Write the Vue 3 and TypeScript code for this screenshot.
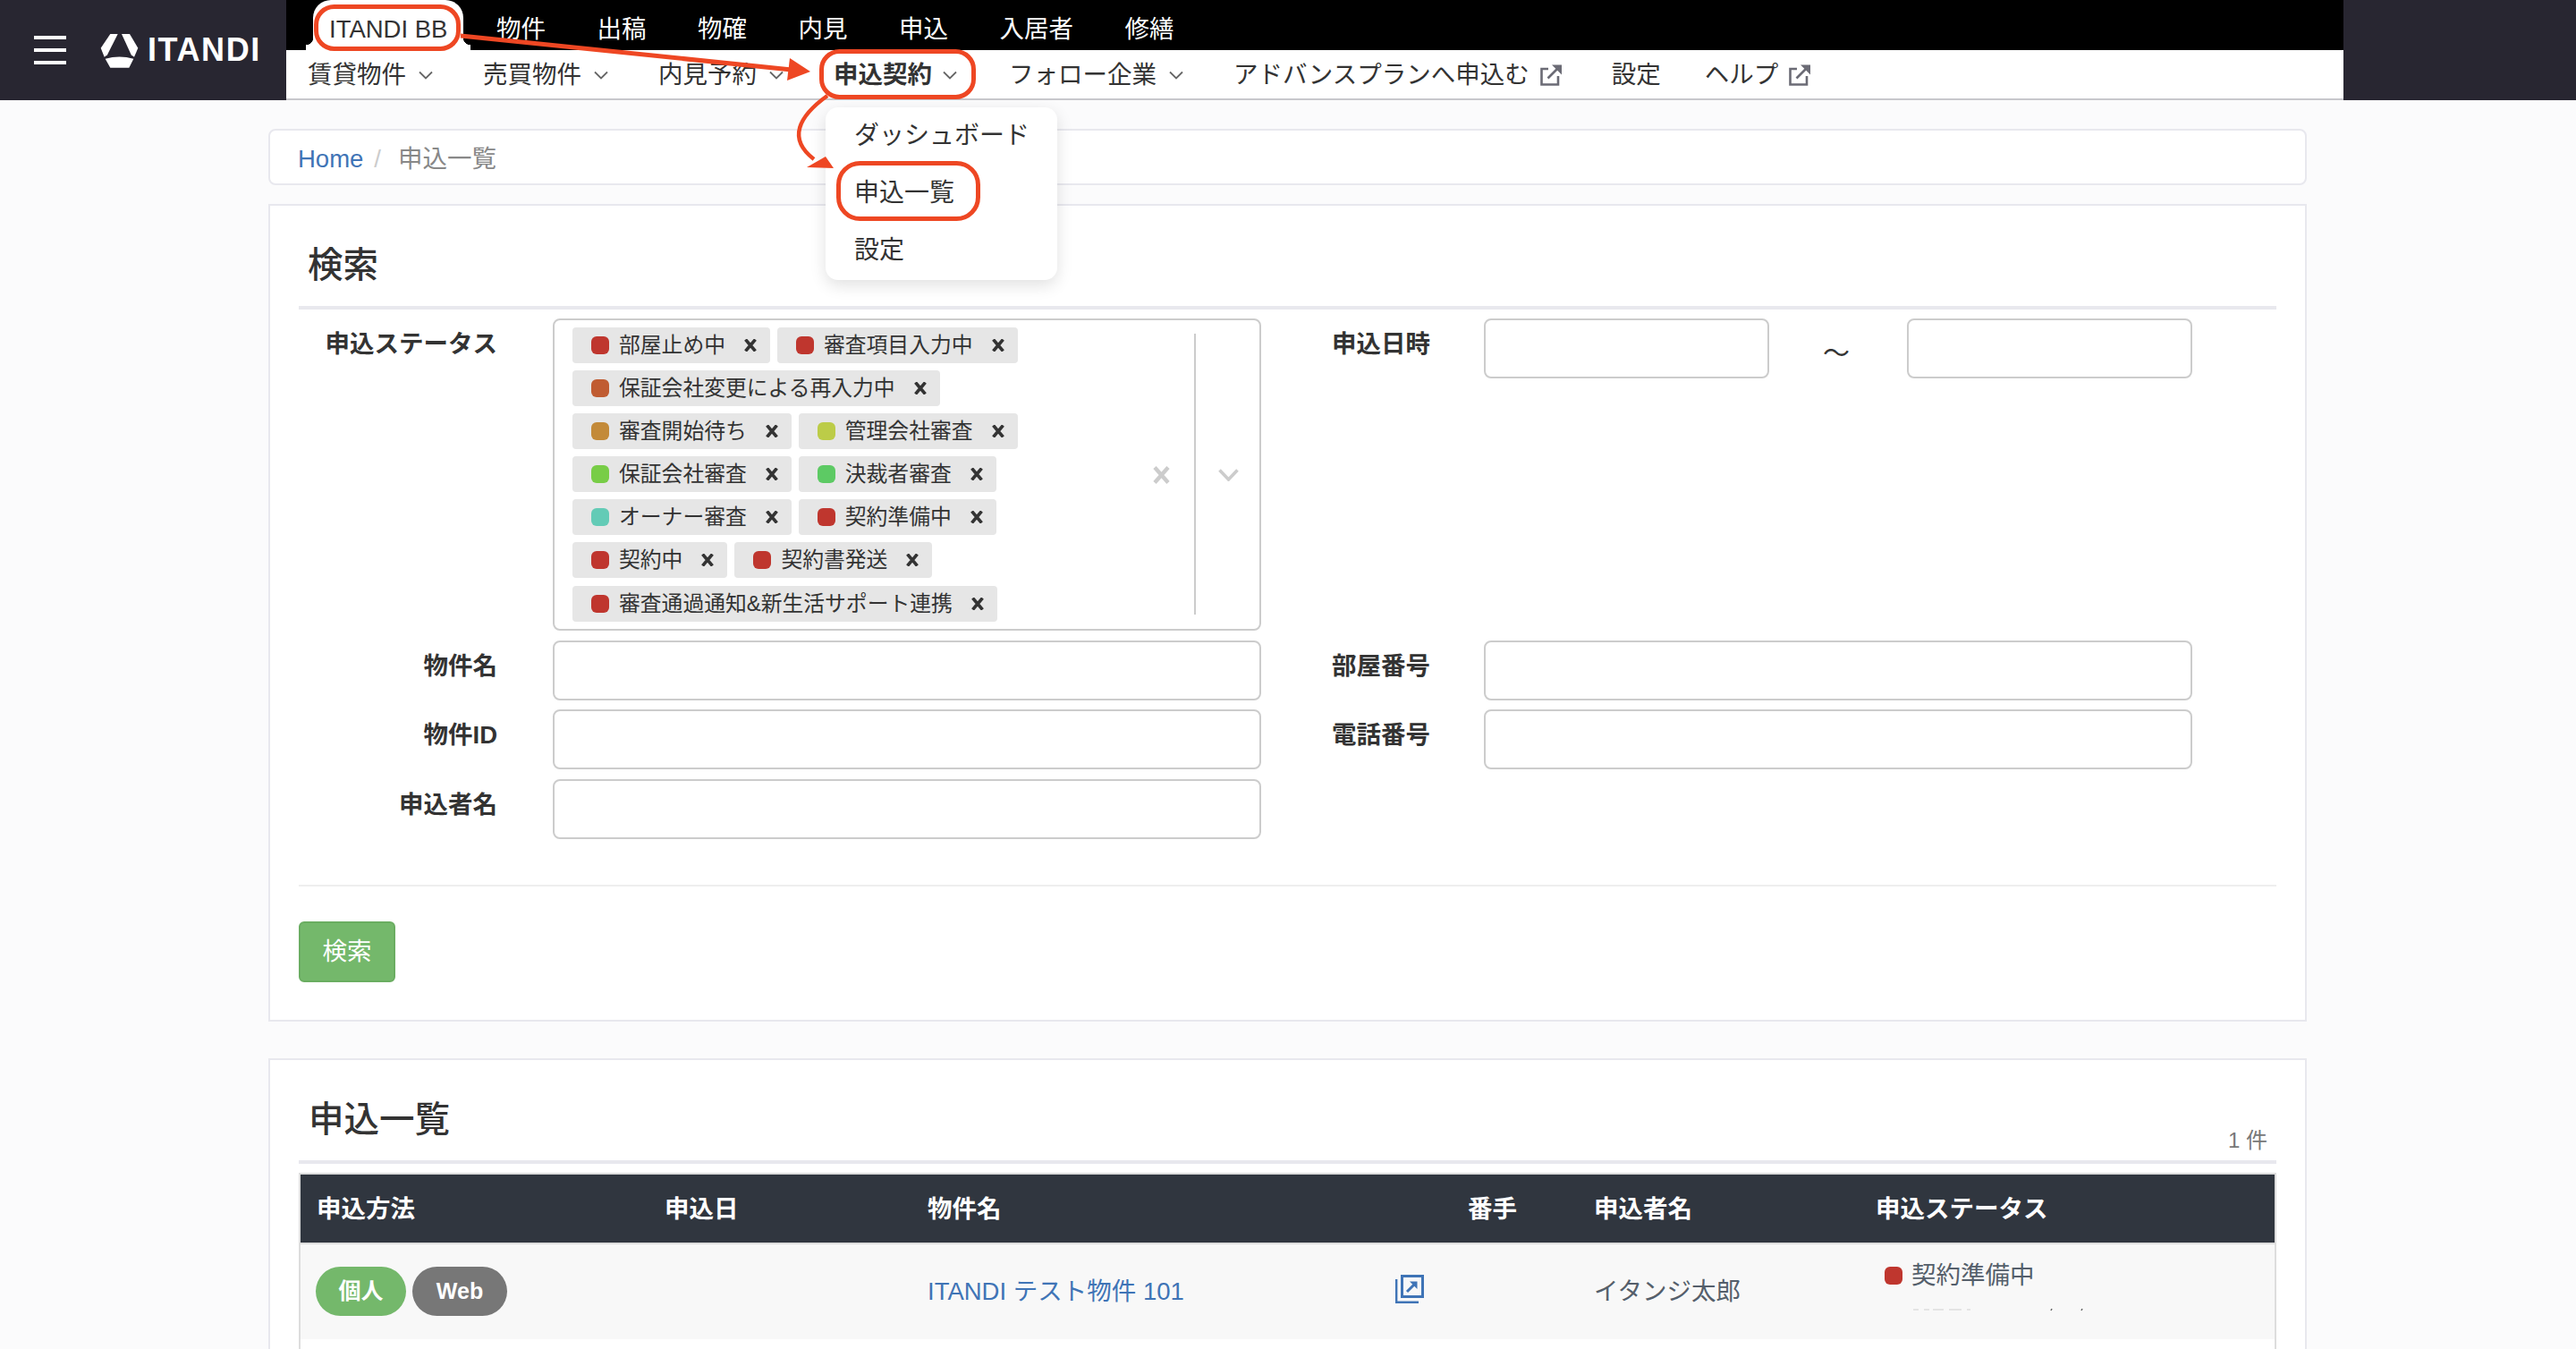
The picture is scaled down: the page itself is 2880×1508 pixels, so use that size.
<script setup lang="ts">
interface StatusTag {
  label: string
  color: string
}

interface NavItem {
  label: string
  chevron?: boolean
  external?: boolean
  active?: boolean
  tight?: boolean
}

const topTabs: string[] = ['物件', '出稿', '物確', '内見', '申込', '入居者', '修繕']

const navItems: NavItem[] = [
  { label: '賃貸物件', chevron: true },
  { label: '売買物件', chevron: true },
  { label: '内見予約', chevron: true },
  { label: '申込契約', chevron: true, active: true },
  { label: 'フォロー企業', chevron: true },
  { label: 'アドバンスプランへ申込む', external: true },
  { label: '設定' },
  { label: 'ヘルプ', external: true, tight: true },
]

const menuItems: string[] = ['ダッシュボード', '申込一覧', '設定']

const red = '#bf362e'
const statusTags: StatusTag[] = [
  { label: '部屋止め中', color: red },
  { label: '審査項目入力中', color: red },
  { label: '保証会社変更による再入力中', color: '#c05c32' },
  { label: '審査開始待ち', color: '#c38a39' },
  { label: '管理会社審査', color: '#bccc48' },
  { label: '保証会社審査', color: '#78cd47' },
  { label: '決裁者審査', color: '#5dca64' },
  { label: 'オーナー審査', color: '#63cbb6' },
  { label: '契約準備中', color: red },
  { label: '契約中', color: red },
  { label: '契約書発送', color: red },
  { label: '審査通過通知&新生活サポート連携', color: red },
]

const columns: string[] = ['申込方法', '申込日', '物件名', '番手', '申込者名', '申込ステータス']
</script>

<template>
  <div class="page">
    <header class="header">
      <div class="brand">
        <div class="burger"><span></span><span></span><span></span></div>
        <svg class="brand-mark" viewBox="0 0 43 39" aria-hidden="true">
          <path d="M11.3 1H19.7L8 24.3L4.7 26.7L0.7 16.7Z" fill="#fff" />
          <path d="M24 1H33L42.3 16.7L38 26.7L34.7 24.3Z" fill="#fff" />
          <path d="M5.7 28.7Q21.5 24.5 37.3 28.7L32.3 38.7H11.3Z" fill="#fff" />
        </svg>
        <span class="brand-name">ITANDI</span>
      </div>

      <div class="header-main">
        <div class="tabs">
          <span class="tab tab--active">ITANDI BB</span>
          <span v-for="tab in topTabs" :key="tab" class="tab">{{ tab }}</span>
        </div>
        <nav class="nav">
          <div
              v-for="item in navItems"
              :key="item.label"
              :class="['nav-item', { 'nav-item--active': item.active, 'nav-item--tight': item.tight }]"
          >
            <span>{{ item.label }}</span>
            <svg v-if="item.chevron" class="nav-chevron" viewBox="0 0 16 10" aria-hidden="true">
              <path d="M1 1.5L8 8.5L15 1.5" fill="none" stroke="#666" stroke-width="1.8" />
            </svg>
            <svg v-if="item.external" class="nav-external" viewBox="0 0 24 24" aria-hidden="true">
              <path d="M9 5H1.5V22.5H20V13" fill="none" stroke="#6b6b75" stroke-width="2.6" />
              <path d="M8.5 15.5L20 4" fill="none" stroke="#6b6b75" stroke-width="2.6" />
              <path d="M13 0.5H24V11.5Z" fill="#6b6b75" />
            </svg>
            <div v-if="item.active" class="menu">
              <div v-for="entry in menuItems" :key="entry" class="menu-item">{{ entry }}</div>
            </div>
          </div>
        </nav>
      </div>

      <div class="header-side"></div>
    </header>

    <main class="main">
      <div class="breadcrumb">
        <a class="link">Home</a>
        <span class="breadcrumb-sep">/</span>
        <span>申込一覧</span>
      </div>

      <section class="panel">
        <div class="panel-head">
          <h2 class="panel-title panel-title--search">検索</h2>
        </div>

        <div class="form">
          <div class="form-row">
            <label class="form-label">申込ステータス</label>
            <div class="select">
              <div class="select-values">
                <span v-for="tag in statusTags" :key="tag.label" class="tag">
                  <i class="dot" :style="{ backgroundColor: tag.color }"></i>
                  <span class="tag-label">{{ tag.label }}</span>
                  <svg class="tag-x" viewBox="0 0 14 14" aria-hidden="true">
                    <path d="M1.5 0.5L12.5 13.5M12.5 0.5L1.5 13.5" stroke="#333" stroke-width="3.6" />
                  </svg>
                </span>
              </div>
              <svg class="select-clear" viewBox="0 0 19 20" aria-hidden="true">
                <path d="M2 1.5L17 18.5M17 1.5L2 18.5" stroke="#ccc" stroke-width="4.4" />
              </svg>
              <span class="select-divider"></span>
              <svg class="select-chevron" viewBox="0 0 23 14" aria-hidden="true">
                <path d="M1.5 1.5L11.5 12L21.5 1.5" fill="none" stroke="#ccc" stroke-width="3.6" />
              </svg>
            </div>
            <label class="form-label form-label--side">申込日時</label>
            <input class="input input--date" type="text" />
            <span class="tilde">～</span>
            <input class="input input--date" type="text" />
          </div>

          <div class="form-row">
            <label class="form-label">物件名</label>
            <input class="input input--wide" type="text" />
            <label class="form-label form-label--side">部屋番号</label>
            <input class="input input--wide" type="text" />
          </div>

          <div class="form-row">
            <label class="form-label">物件ID</label>
            <input class="input input--wide" type="text" />
            <label class="form-label form-label--side">電話番号</label>
            <input class="input input--wide" type="text" />
          </div>

          <div class="form-row">
            <label class="form-label">申込者名</label>
            <input class="input input--wide" type="text" />
          </div>
        </div>

        <div class="form-rule"></div>
        <button class="search-button" type="button">検索</button>
      </section>

      <section class="panel panel--list">
        <div class="panel-head panel-head--ruled">
          <h2 class="panel-title">申込一覧</h2>
          <span class="count">1 件</span>
        </div>

        <div class="table-wrap">
          <table class="table">
            <colgroup>
              <col style="width: 387px" />
              <col style="width: 294px" />
              <col style="width: 604px" />
              <col style="width: 141px" />
              <col style="width: 315px" />
              <col />
            </colgroup>
            <thead>
              <tr>
                <th v-for="column in columns" :key="column">{{ column }}</th>
              </tr>
            </thead>
            <tbody>
              <tr>
                <td>
                  <span class="pill pill--green">個人</span>
                  <span class="pill pill--gray">Web</span>
                </td>
                <td></td>
                <td>
                  <div class="property">
                    <a class="link">ITANDI テスト物件 101</a>
                    <svg class="open-icon" viewBox="0 0 32 32" aria-hidden="true">
                      <rect x="7.5" y="1.5" width="23" height="23" fill="none" stroke="#3f74b6" stroke-width="3" />
                      <path d="M1.2 5V30.8H26" fill="none" stroke="#3f74b6" stroke-width="2.4" />
                      <path d="M13 19L22 10" fill="none" stroke="#3f74b6" stroke-width="3" />
                      <path d="M16 7.5H24.5V16Z" fill="#3f74b6" />
                    </svg>
                  </div>
                </td>
                <td></td>
                <td>イタンジ太郎</td>
                <td class="status-cell">
                  <div class="status">
                    <i class="dot" :style="{ backgroundColor: red }"></i>
                    <span>契約準備中</span>
                  </div>
                  <svg class="status-rest" viewBox="0 0 230 4" aria-hidden="true">
                    <path d="M2 2H8M14 2H20M24 2H36M42 2H56M62 2H66" stroke="#ddd" stroke-width="1.5" />
                    <path d="M156 3L157 1M190 3L191 1" stroke="#666" stroke-width="1.5" />
                  </svg>
                </td>
              </tr>
            </tbody>
          </table>
        </div>
      </section>
    </main>

    <!-- 説明用の赤い枠と矢印 -->
    <svg class="callouts" viewBox="0 0 2880 1508" aria-hidden="true">
      <g fill="none" stroke="#ee4723">
        <rect x="353.5" y="7.5" width="159" height="47" rx="20" stroke-width="5" />
        <rect x="918.5" y="57.5" width="170" height="51" rx="20" stroke-width="5" />
        <rect x="937.5" y="182.5" width="156" height="62" rx="24" stroke-width="5" />
        <path d="M515 40L885 78" stroke-width="5" />
        <path d="M925 107C893 130 880 155 910 178" stroke-width="4.5" />
      </g>
      <path d="M883 65L906 80L880 90Z" fill="#ee4723" />
      <path d="M923 175L932 188L902 187Z" fill="#ee4723" />
    </svg>
  </div>
</template>

<style>
body {
  background-color: #fbfbfc;
}
</style>

<style scoped>
.page {
  position: relative;
  width: 2880px;
  height: 1508px;
  overflow: hidden;
  background-color: #fbfbfc;
  color: #333;
  font-family: "Liberation Sans", "Noto Sans CJK JP", sans-serif;
  font-size: 27.5px;
  line-height: 1.4;
}

.header {
  display: flex;
  height: 112px;
}

.brand {
  display: flex;
  align-items: center;
  width: 320px;
  padding-left: 38px;
  box-sizing: border-box;
  background-color: #282631;
}

.burger {
  display: flex;
  flex-direction: column;
  justify-content: space-between;
  width: 36px;
  height: 32px;
}

.burger span {
  height: 4px;
  background-color: #fff;
}

.brand-mark {
  width: 43px;
  height: 39px;
  margin-left: 38px;
}

.brand-name {
  margin-left: 10px;
  color: #fff;
  font-size: 36px;
  font-weight: 700;
  letter-spacing: 1.6px;
  line-height: 1;
}

.header-main {
  flex: 1;
  display: flex;
  flex-direction: column;
}

.header-side {
  width: 260px;
  background-color: #282631;
}

.tabs {
  display: flex;
  gap: 57.5px;
  height: 56px;
  padding: 8px 0 0 48px;
  box-sizing: border-box;
  background-color: #000;
  color: #fff;
}

.tab {
  line-height: 50px;
}

.tab--active {
  position: relative;
  height: 56px;
  margin: -8px -21px 0 -18px;
  padding: 8px 18px 0;
  box-sizing: border-box;
  border-radius: 20px 20px 0 0;
  background-color: #fff;
  color: #333;
}

.tab--active::before,
.tab--active::after {
  content: "";
  position: absolute;
  bottom: 0;
  width: 8px;
  height: 14px;
}

.tab--active::before {
  left: -8px;
  background: radial-gradient(circle at 0 0, transparent 8px, #fff 8.5px);
}

.tab--active::after {
  right: -8px;
  background: radial-gradient(circle at 100% 0, transparent 8px, #fff 8.5px);
}

.nav {
  display: flex;
  gap: 56px;
  height: 56px;
  padding-left: 24px;
  box-sizing: border-box;
  border-bottom: 2px solid #c8c8cc;
  background-color: #fff;
}

.nav-item {
  position: relative;
  display: flex;
  align-items: center;
  padding-top: 2px;
  line-height: 52px;
}

.nav-item--active {
  font-weight: 700;
}

.nav-item--tight {
  margin-left: -7px;
}

.nav-chevron {
  width: 16px;
  height: 10px;
  margin-left: 14px;
}

.nav-item--active .nav-chevron {
  margin-left: 12px;
  margin-right: 2px;
}

.nav-external {
  width: 24px;
  height: 24px;
  margin-left: 12px;
}

.menu {
  position: absolute;
  top: 64px;
  left: -9px;
  z-index: 2;
  width: 259px;
  height: 193px;
  border-radius: 14px;
  background-color: #fff;
  box-shadow: 0 6px 18px rgba(0, 0, 0, 0.12);
  font-size: 28px;
  font-weight: 400;
}

.menu-item {
  height: 64px;
  padding-left: 32px;
  line-height: 64px;
}

.main {
  width: 2279px;
  margin: 32px 0 0 300px;
}

.breadcrumb {
  display: flex;
  align-items: center;
  height: 63px;
  padding: 6px 0 0 31px;
  box-sizing: border-box;
  border: 2px solid #e8e8ee;
  border-radius: 8px;
  background-color: #fff;
  color: #888;
}

.breadcrumb-sep {
  margin: 0 19px 0 12px;
  color: #ccc;
}

.link {
  color: #3f74b6;
}

.panel {
  margin-top: 21px;
  padding: 0 32px 42px;
  border: 2px solid #e8e8ee;
  background-color: #fff;
}

.panel--list {
  margin-top: 41px;
  padding-bottom: 0;
}

.panel-head {
  display: flex;
  justify-content: space-between;
  align-items: flex-end;
  height: 112px;
  box-sizing: border-box;
  padding: 44px 10px 24px 11px;
}

.panel-head--ruled {
  height: 116px;
  border-bottom: 4px solid #e8e8ee;
}

.panel-title {
  margin: 0;
  font-size: 39.5px;
  font-weight: 500;
  line-height: 44px;
}

.panel-title--search {
  margin-left: -1px;
}

.count {
  margin-bottom: -18px;
  color: #777;
  font-size: 24px;
  line-height: 32px;
}

.form {
  padding-top: 10px;
  border-top: 4px solid #e8e8ee;
  margin-bottom: 51px;
}

.form-row {
  display: flex;
  align-items: flex-start;
  margin-bottom: 10.5px;
}

.form-row:last-child {
  margin-bottom: 0;
}

.form-label {
  flex: none;
  width: 222px;
  margin-right: 62px;
  padding-top: 15px;
  font-weight: 700;
  line-height: 28px;
  text-align: right;
}

.form-label--side {
  width: 189px;
  margin-right: 60px;
}

.input {
  flex: none;
  height: 67px;
  box-sizing: border-box;
  border: 2px solid #ccc;
  border-radius: 8px;
  background-color: #fff;
}

.input--wide {
  width: 792px;
}

.input--date {
  width: 319px;
}

.tilde {
  flex: none;
  width: 154px;
  padding: 18px 4px 0 0;
  box-sizing: border-box;
  font-size: 30px;
  text-align: center;
}

.select {
  flex: none;
  display: flex;
  align-items: center;
  width: 792px;
  height: 349px;
  box-sizing: border-box;
  border: 2px solid #ccc;
  border-radius: 8px;
}

.select-values {
  flex: 1;
  align-self: flex-start;
  display: flex;
  flex-wrap: wrap;
  align-content: flex-start;
  gap: 8px;
  padding: 8px 90px 0 20px;
}

.tag {
  display: flex;
  align-items: center;
  height: 40px;
  padding: 0 15px 0 21px;
  border-radius: 4px;
  background-color: #e6e6e6;
  font-size: 23.8px;
}

.tag:last-child {
  margin-top: 1px;
}

.dot {
  flex: none;
  display: block;
  width: 20px;
  height: 20px;
  border-radius: 6px;
}

.tag-label {
  margin: 0 21px 0 11px;
  white-space: nowrap;
}

.tag-x {
  width: 14px;
  height: 14px;
}

.select-clear {
  flex: none;
  width: 19px;
  height: 20px;
  margin-right: 27px;
}

.select-divider {
  flex: none;
  align-self: stretch;
  width: 2px;
  margin: 15px 0 16px;
  background-color: #ccc;
}

.select-chevron {
  flex: none;
  width: 23px;
  height: 14px;
  margin: 0 23px 0 25px;
}

.form-rule {
  height: 2px;
  margin-bottom: 39.5px;
  background-color: #eee;
}

.search-button {
  display: block;
  width: 108px;
  height: 68px;
  padding: 0;
  border: 2px solid #6aad61;
  border-radius: 6px;
  background-color: #74b86b;
  color: #fff;
  font: inherit;
}

.table-wrap {
  margin-top: 10px;
  padding-bottom: 40px;
  border: 2px solid #ddd;
  border-bottom: 0;
}

.table {
  width: 100%;
  table-layout: fixed;
  border-collapse: collapse;
}

.table th {
  height: 74px;
  padding: 2px 0 0 20px;
  border-bottom: 2px solid #ddd;
  background-color: #30363f;
  color: #fff;
  font-weight: 700;
  text-align: left;
}

.table th:first-child {
  padding-left: 18px;
}

.table td {
  height: 106px;
  padding: 0 0 0 20px;
  background-color: #f8f8f8;
  color: #555f6b;
}

.table td:first-child {
  padding-left: 17px;
}

.pill {
  display: inline-block;
  height: 55px;
  margin-top: -2px;
  border-radius: 28px;
  color: #fff;
  font-size: 25px;
  font-weight: 700;
  line-height: 55px;
  text-align: center;
  vertical-align: middle;
}

.pill--green {
  width: 101px;
  margin-right: 7px;
  background-color: #74b86b;
}

.pill--gray {
  width: 106px;
  background-color: #777;
}

.property {
  display: flex;
  justify-content: space-between;
  align-items: center;
  padding-right: 29px;
}

.open-icon {
  width: 32px;
  height: 32px;
  margin-top: -7px;
}

.status-cell {
  vertical-align: top;
}

.status {
  display: flex;
  align-items: center;
  gap: 10px;
  margin: 25px 0 0 10px;
  line-height: 20px;
}

.status-rest {
  display: block;
  width: 230px;
  height: 4px;
  margin: 26px 0 0 40px;
}

.callouts {
  position: absolute;
  top: 0;
  left: 0;
  z-index: 3;
  width: 2880px;
  height: 1508px;
  pointer-events: none;
}
</style>
